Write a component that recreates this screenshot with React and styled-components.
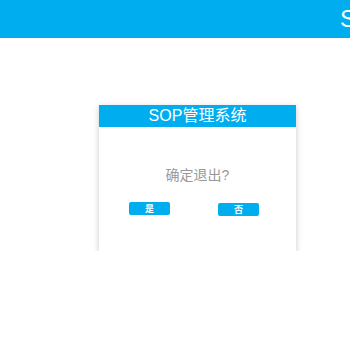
import React from "react";
import styled, { createGlobalStyle } from "styled-components";

const Global = createGlobalStyle`
  html, body { margin: 0; padding: 0; background: #fff; }
  body { font-family: "Liberation Sans", "Noto Sans CJK SC", sans-serif; }
`;

const Header = styled.header`
  height: 38px;
  background: #00aeef;
  display: flex;
  align-items: center;
  padding-left: 340px;
  overflow: hidden;
  white-space: nowrap;
  box-sizing: border-box;
`;

const HeaderTitle = styled.span`
  color: #fff;
  font-size: 24px;
  line-height: 24px;
`;

const Stage = styled.main`
  padding: 67px 0 0 99px;
`;

const Dialog = styled.section`
  width: 197px;
  height: 146px;
  background: #fff;
  box-shadow: 0 2px 6px rgba(0, 0, 0, 0.22);
  display: flex;
  flex-direction: column;
`;

const TitleBar = styled.div`
  height: 22px;
  background: #00aeef;
  color: #fff;
  font-size: 16px;
  line-height: 22px;
  text-align: center;
`;

const Message = styled.p`
  margin: 40px 0 0;
  font-size: 14px;
  line-height: 16px;
  color: #999;
  text-align: center;
`;

const Actions = styled.div`
  display: flex;
  gap: 48px;
  padding-left: 30px;
  margin-top: 19px;
`;

const Btn = styled.button`
  width: 41px;
  height: 13px;
  margin-top: ${(p) => p.$offset || 0}px;
  padding: 0;
  border: none;
  border-radius: 2px;
  background: #00aeef;
  color: #fff;
  font-size: 9px;
  line-height: 13px;
  font-family: "Noto Sans CJK SC", sans-serif;
  font-weight: bold;
`;

export default function App() {
  return (
    <>
      <Global />
      <Header>
        <HeaderTitle>SOP管理系统</HeaderTitle>
      </Header>
      <Stage>
        <Dialog>
          <TitleBar>SOP管理系统</TitleBar>
          <Message>确定退出?</Message>
          <Actions>
            <Btn>是</Btn>
            <Btn $offset={1}>否</Btn>
          </Actions>
        </Dialog>
      </Stage>
    </>
  );
}
